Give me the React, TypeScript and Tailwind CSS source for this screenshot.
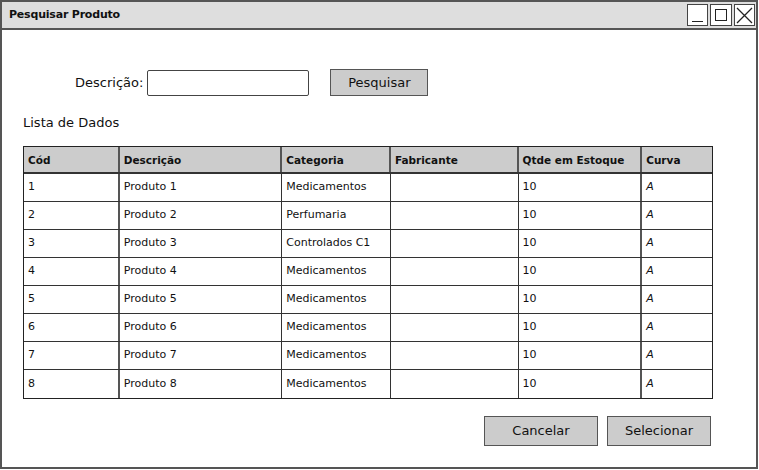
const columns = [
    { label: "Cód", width: "w-[96px]" },
    { label: "Descrição", width: "w-[163px]" },
    { label: "Categoria", width: "w-[109px]" },
    { label: "Fabricante", width: "w-[128px]" },
    { label: "Qtde em Estoque", width: "w-[124px]" },
    { label: "Curva", width: "w-[70px]" },
];

const products = [
    { cod: "1", desc: "Produto 1", cat: "Medicamentos" },
    { cod: "2", desc: "Produto 2", cat: "Perfumaria" },
    { cod: "3", desc: "Produto 3", cat: "Controlados C1" },
    { cod: "4", desc: "Produto 4", cat: "Medicamentos" },
    { cod: "5", desc: "Produto 5", cat: "Medicamentos" },
    { cod: "6", desc: "Produto 6", cat: "Medicamentos" },
    { cod: "7", desc: "Produto 7", cat: "Medicamentos" },
    { cod: "8", desc: "Produto 8", cat: "Medicamentos" },
];

const App = () => {
    return (
        <div className="w-[759px] h-[470px] bg-white font-['DejaVu_Sans','Noto_Sans',sans-serif] text-[#111]">
            <div className="w-[758px] h-[469px] border-2 border-[#555] flex flex-col">
                {/* Title bar */}
                <div className="h-[28px] bg-[#dedede] border-b-2 border-[#555] flex items-center justify-between pl-[7px] pr-[1px]">
                    <span className="text-[11px] font-bold tracking-[-0.2px]">Pesquisar Produto</span>
                    <div className="flex gap-[2px]">
                        <div className="w-[21px] h-[22px] border border-[#444] bg-white flex items-end justify-center pb-[3px]">
                            <div className="w-[11px] h-[1.5px] bg-[#222]" />
                        </div>
                        <div className="w-[22px] h-[22px] border border-[#444] bg-white flex items-center justify-center">
                            <div className="w-[12px] h-[12px] border-[1.5px] border-[#222]" />
                        </div>
                        <div className="w-[21px] h-[22px] border border-[#444] bg-white flex items-center justify-center">
                            <svg width="17" height="17" viewBox="0 0 17 17">
                                <path d="M1 1 L16 16 M16 1 L1 16" stroke="#222" strokeWidth="1.3" fill="none" />
                            </svg>
                        </div>
                    </div>
                </div>

                <div className="flex-1 flex flex-col pl-[21px] pr-[43px]">
                    {/* Search */}
                    <div className="mt-[39px] flex items-center pl-[52px] h-[27px]">
                        <span className="text-[13px] mr-[4px]">Descrição:</span>
                        <div className="w-[162px] h-[26px] border-[1.5px] border-[#444] rounded-[2px] bg-white" />
                        <button className="ml-[21px] w-[98px] h-[27px] bg-[#cccccc] border-[1.5px] border-[#555] text-[13px]">
                            Pesquisar
                        </button>
                    </div>

                    <div className="mt-[17px] h-[20px] flex items-center text-[13px]">Lista de Dados</div>

                    {/* Table */}
                    <div className="mt-[13px] w-[690px] border border-[#222]">
                        <div className="flex h-[27px] bg-[#cccccc] border-b-2 border-[#333]">
                            {columns.map((col, i) => (
                                <div
                                    key={col.label}
                                    className={`${col.width} ${i < columns.length - 1 ? "border-r-2 border-[#555]" : ""} flex items-center pl-[4px] pt-[3px] text-[10.5px] font-bold`}
                                >
                                    {col.label}
                                </div>
                            ))}
                        </div>
                        {products.map((p, r) => (
                            <div key={p.cod} className={`flex h-[28px] ${r < products.length - 1 ? "border-b border-[#333]" : ""} text-[11px]`}>
                                <div className="w-[96px] border-r-2 border-[#555] flex items-center pl-[4px]">{p.cod}</div>
                                <div className="w-[163px] border-r border-[#333] flex items-center pl-[4px]">{p.desc}</div>
                                <div className="w-[109px] border-r border-[#333] flex items-center pl-[4px]">{p.cat}</div>
                                <div className="w-[128px] border-r border-[#333] flex items-center pl-[4px]"></div>
                                <div className="w-[124px] border-r-2 border-[#555] flex items-center pl-[4px]">10</div>
                                <div className="w-[70px] flex items-center pl-[4px] italic">A</div>
                            </div>
                        ))}
                    </div>

                    {/* Actions */}
                    <div className="mt-[17px] w-[690px] flex justify-end gap-[9px] pr-[2px]">
                        <button className="w-[114px] h-[30px] bg-[#cccccc] border-[1.5px] border-[#555] text-[13px]">
                            Cancelar
                        </button>
                        <button className="w-[104px] h-[30px] bg-[#cccccc] border-[1.5px] border-[#555] text-[13px]">
                            Selecionar
                        </button>
                    </div>
                </div>
            </div>
        </div>
    );
};

export default App;
